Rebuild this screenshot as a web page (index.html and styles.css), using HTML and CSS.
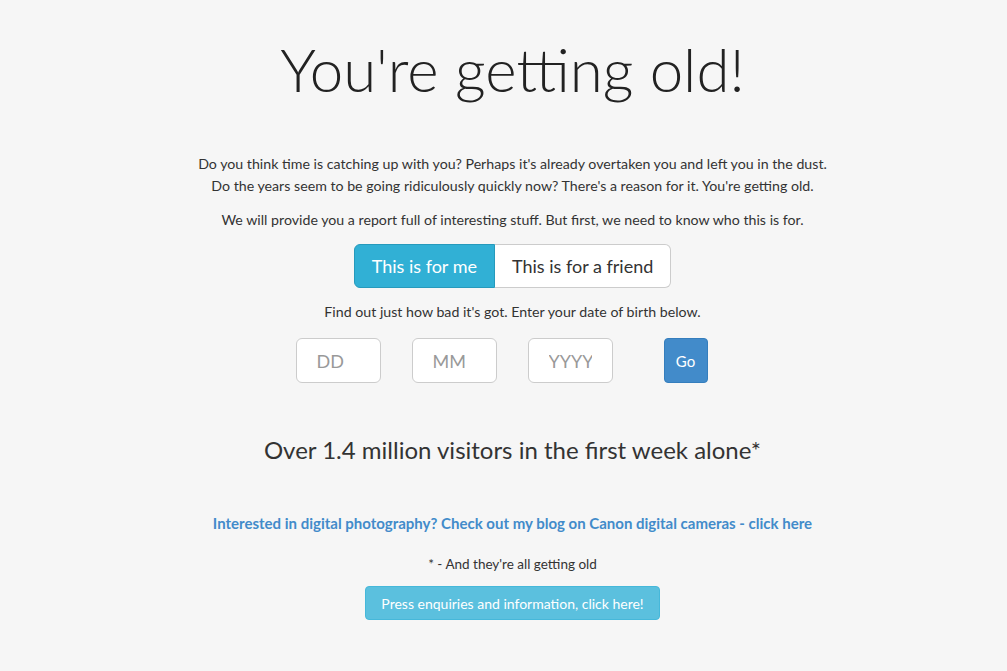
FILE: index.html
```html
<!DOCTYPE html>
<html>
<head>
<meta charset="utf-8">
<link rel="stylesheet" href="styles.css">
</head>
<body>
<div class="page">
  <h1 class="title">You're getting old!</h1>
  <p class="intro">Do you think time is catching up with you? Perhaps it's already overtaken you and left you in the dust.<br>Do the years seem to be going ridiculously quickly now? There's a reason for it. You're getting old.</p>
  <p class="intro2">We will provide you a report full of interesting stuff. But first, we need to know who this is for.</p>
  <div class="toggle">
    <button class="tbtn active">This is for me</button>
    <button class="tbtn">This is for a friend</button>
  </div>
  <p class="find">Find out just how bad it's got. Enter your date of birth below.</p>
  <div class="dob">
    <input class="field" placeholder="DD">
    <input class="field" placeholder="MM">
    <input class="field" placeholder="YYYY">
    <button class="go">Go</button>
  </div>
  <h2 class="visitors">Over 1.4 million visitors in the first week alone*</h2>
  <a class="blog" href="#">Interested in digital photography? Check out my blog on Canon digital cameras - click here</a>
  <p class="note">* - And they're all getting old</p>
  <button class="press">Press enquiries and information, click here!</button>
</div>
</body>
</html>
```
FILE: styles.css
```css
html, body {
  margin: 0;
  padding: 0;
  background: #f6f6f6;
}
body {
  font-family: Lato, "Open Sans", sans-serif;
  color: #333;
  font-size: 14.2px;
}
.page {
  display: flex;
  flex-direction: column;
  align-items: center;
  text-align: center;
  padding-left: 18px;
}
.title {
  margin: 31px 0 0;
  font-size: 60px;
  font-weight: 300;
  line-height: 76px;
  color: #222;
}
.intro {
  margin: 46px 0 0;
  line-height: 22px;
}
.intro2 {
  margin: 12px 0 0;
  line-height: 22px;
}
.toggle {
  display: flex;
  margin-top: 13px;
}
.tbtn {
  font-family: inherit;
  font-size: 18px;
  height: 44px;
  padding: 0 17px;
  background: #fff;
  color: #333;
  border: 1px solid #ccc;
  border-left: none;
  border-radius: 0 6px 6px 0;
}
.tbtn.active {
  background: #31b0d5;
  border: 1px solid #269abc;
  color: #fff;
  border-radius: 6px 0 0 6px;
}
.find {
  margin: 13px 0 0;
  line-height: 22px;
}
.dob {
  display: flex;
  gap: 31px;
  margin-top: 15px;
  margin-right: 22px;
}
.field {
  box-sizing: border-box;
  width: 85px;
  height: 45px;
  padding: 0 20px;
  font-family: inherit;
  font-size: 18px;
  border: 1px solid #ccc;
  border-radius: 6px;
  background: #fff;
}
.field::placeholder {
  color: #999;
}
.go {
  margin-left: 20px;
  box-sizing: border-box;
  width: 44px;
  height: 45px;
  font-family: inherit;
  font-size: 15px;
  color: #fff;
  background: #428bca;
  border: 1px solid #357ebd;
  border-radius: 4px;
}
.visitors {
  margin: 52px 0 0;
  font-size: 24px;
  font-weight: 400;
  line-height: 30px;
  color: #333;
}
.blog {
  margin-top: 47px;
  color: #428bca;
  font-size: 15px;
  font-weight: 700;
  text-decoration: none;
  line-height: 22px;
}
.note {
  margin: 21px 0 0;
  font-size: 13.5px;
  line-height: 18px;
}
.press {
  margin-top: 13px;
  box-sizing: border-box;
  height: 34px;
  padding: 0 15px;
  font-family: inherit;
  font-size: 14px;
  color: #fff;
  background: #5bc0de;
  border: 1px solid #46b8da;
  border-radius: 4px;
}
```
